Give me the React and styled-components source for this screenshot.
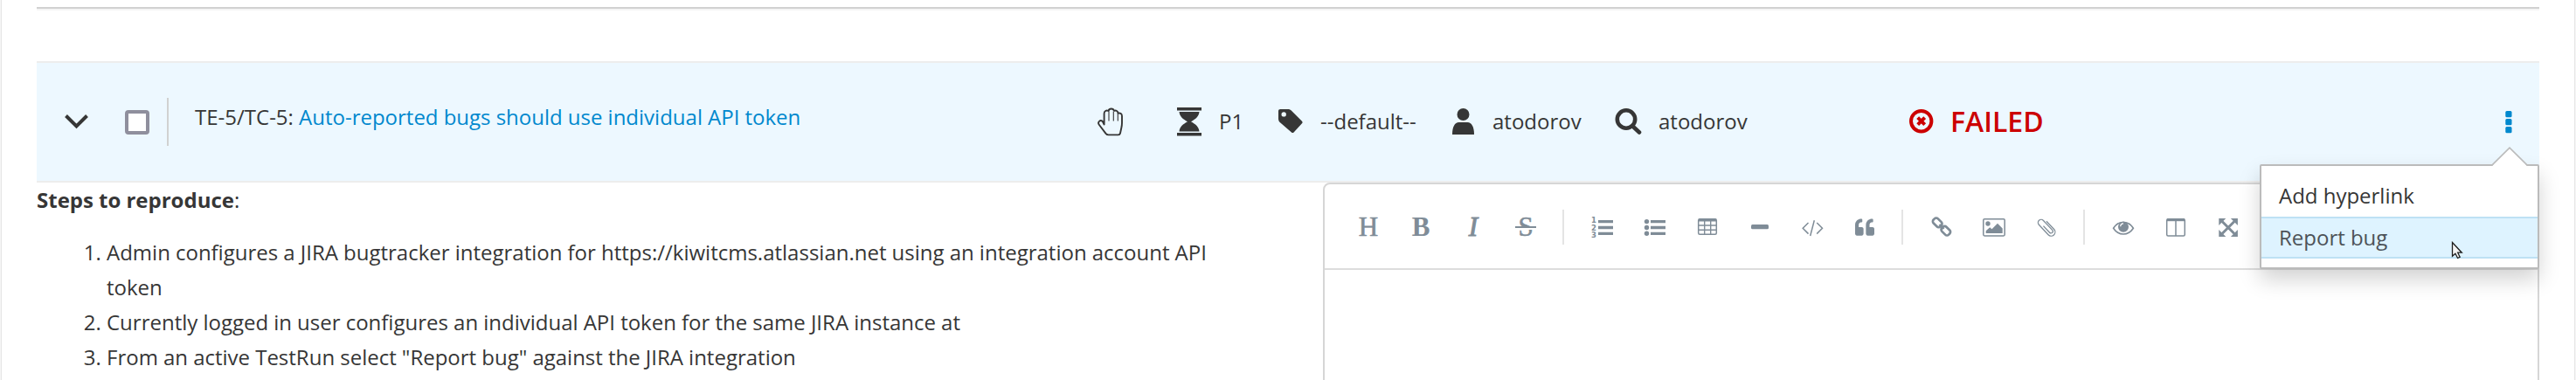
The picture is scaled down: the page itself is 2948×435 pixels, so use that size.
import React from "react";
import styled, { createGlobalStyle } from "styled-components";
import { FaQuoteLeft } from "react-icons/fa";

const GlobalStyle = createGlobalStyle`
  * { box-sizing: border-box; }
  body {
    margin: 0;
    background: #fff;
    color: #363636;
    font-family: "Open Sans", sans-serif;
    font-size: 24px;
    line-height: 40px;
    word-spacing: -0.12px;
  }
`;

const Page = styled.div`
  height: 435px;
  overflow: hidden;
  padding: 8px 41px 0;
  border: solid #f5f5f5;
  border-width: 0 1px;
  box-shadow: inset 1px 0 #e6e6e6, inset -1px 0 #e6e6e6;
`;

const Divider = styled.div`
  height: 4px;
  border-top: 2px solid #d1d1d1;
  border-bottom: 2px solid #f5f5f5;
  margin-bottom: 58px;
`;

const Row = styled.div`
  position: relative;
  display: flex;
  align-items: center;
  height: 139px;
  padding-left: 32px;
  background: #edf8ff;
  border-top: 2px solid #ededed;
  border-bottom: 2px solid #ededed;
`;

const Chevron = styled.svg`
  width: 27px;
  height: 18px;
  margin: 0 42px 2px 0;
`;

const Checkbox = styled.span`
  width: 28px;
  height: 28px;
  border: 4px solid #8f8f9d;
  border-radius: 4px;
  background: #fff;
  margin-right: 20px;
`;

const Separator = styled.span`
  width: 2px;
  height: 55px;
  background: #d1d1d1;
  margin-right: 30px;
`;

const Title = styled.div`
  width: 1033px;
  margin-bottom: 12px;
`;

const Link = styled.a`
  color: #0088ce;
`;

const Meta = styled.div`
  display: flex;
  align-items: center;
  width: ${(p) => p.$width}px;
  margin-bottom: 1px;
  white-space: nowrap;
`;

const MetaIcon = styled.span`
  display: flex;
  align-items: center;
  flex: none;
  width: ${(p) => p.$width}px;
  svg { display: block; }
`;

const Status = styled(Meta)`
  color: #cc0000;
  font-size: 32px;
  font-weight: 600;
`;

const Kebab = styled.svg`
  width: 8px;
  height: 26px;
  margin: 0 31px 0 auto;
`;

const Menu = styled.div`
  position: absolute;
  top: 116px;
  right: 0;
  width: 320px;
  padding: 10px 0;
  background: #fff;
  border: 2px solid #bbb;
  border-radius: 2px;
  box-shadow: 0 12px 24px rgba(3, 3, 3, 0.175);
  z-index: 2;
`;

const Caret = styled.svg`
  position: absolute;
  top: -22px;
  right: 11px;
  width: 42px;
  height: 23px;
`;

const MenuItem = styled.div`
  height: 48px;
  padding: 2px 20px;
  border: solid ${(p) => (p.$active ? "#bee1f4" : "transparent")};
  border-width: 2px 0;
  background: ${(p) => (p.$active ? "#def3ff" : "transparent")};
  color: ${(p) => (p.$active ? "#4d5258" : "#363636")};
`;

const Cursor = styled.svg`
  position: absolute;
  left: 217px;
  top: 86px;
  width: 15px;
  height: 22px;
`;

const Details = styled.div`
  display: flex;
  justify-content: space-between;
`;

const Steps = styled.div`
  width: 1392px;
`;

const Paragraph = styled.p`
  margin: 0 0 20px;
`;

const StepList = styled.ol`
  margin: 0;
  padding-left: 80px;
`;

const Editor = styled.div`
  width: 1392px;
  height: 260px;
  border: 2px solid #d6d6d6;
  border-radius: 8px;
`;

const Toolbar = styled.div`
  display: flex;
  align-items: center;
  height: 98px;
  padding: 2px 0 0 20px;
  border-bottom: 2px solid #ddd;
`;

const Tool = styled.span`
  display: flex;
  align-items: center;
  justify-content: center;
  position: relative;
  width: 60px;
  height: 60px;
  color: #7f8c97;
  svg { display: block; }
`;

const Letter = styled(Tool)`
  font: ${(p) => p.$face || "normal"} 31px/60px "Liberation Serif", serif;
  -webkit-text-stroke: ${(p) => p.$stroke || 0.6}px #7f8c97;
`;

const Strike = styled.span`
  position: absolute;
  left: 18px;
  top: 29px;
  width: 24px;
  height: 4px;
  background: #7f8c97;
  border: solid #fff;
  border-width: 0 0 2px;
`;

const ToolGap = styled.span`
  width: 2px;
  height: 40px;
  margin: 0 14px 0 12px;
  background: #e4e4e4;
`;

const Glyph = ({ children }) => (
  <Tool>
    <svg width="60" height="60" viewBox="0 0 60 60" fill="none" stroke="currentColor">
      {children}
    </svg>
  </Tool>
);

const Bars = () => (
  <path d="M25 22h17v3.3h-17zM25 28.8h17v3.4h-17zM25 35.7h17v3.3h-17z" fill="currentColor" stroke="none" />
);

const numeral = { fontFamily: "DejaVu Sans", fontWeight: 700, fontSize: 8.5, fill: "currentColor", stroke: "none" };

const HandIcon = () => (
  <svg width="30" height="33" viewBox="0 0 30 33" fill="none" stroke="#363636" strokeWidth="1.9" strokeLinejoin="round">
    <path d="M7.600 19.500V7c0-2.800 2.500-4.200 4.900-3 .9-3.200 5.500-3.300 6.500-.2 2.200-.9 4.300.4 4.600 2.800 2.500-.6 4.400.8 4.400 3.400v7.500c0 2-.3 4.200-.7 6l-1.300 6c-.3 1.300-1 1.900-2.200 1.900H12.500c-1.300 0-2.200-.5-3-1.500L1.800 19.700c-2.100-2.900 1.300-6.100 4-3.700z" />
    <path d="M13 4.500v11M18.300 4.500v11M23.300 6.500v9" strokeWidth="1.100" />
  </svg>
);

const HourglassIcon = () => (
  <svg width="28" height="33" viewBox="0 0 28 33" fill="#363636">
    <path d="M0 0h28v3.5H0zM0 29h28v3.5H0zM2.5 5h23c-.6 5.500-4.500 8.500-9.500 11.200 5 2.700 8.900 5.800 9.500 11.300h-23c.6-5.500 4.500-8.600 9.500-11.300C7 13.500 3.100 10.500 2.500 5z" />
  </svg>
);

const TagIcon = () => (
  <svg width="28" height="28" viewBox="0 0 28 28">
    <path fill="#363636" fillRule="evenodd" d="M0 2.200C0 .9.900 0 2.200 0H11c1.400 0 3 .7 4 1.700l12 12c.8.800.8 1.800 0 2.600l-9.400 10.100c-.8.800-1.800.8-2.600 0L1.700 15C.7 14 0 12.400 0 11zM6.200 3.200a2.700 2.700 0 1 0 0 5.400 2.700 2.700 0 0 0 0-5.400z" />
  </svg>
);

const UserIcon = () => (
  <svg width="25" height="30" viewBox="0 0 25 30" fill="#363636">
    <circle cx="12.500" cy="7" r="7" />
    <path d="M0 30c0-9 3-14 7.500-14h10C22 16 25 21 25 30z" />
  </svg>
);

const SearchIcon = () => (
  <svg width="31" height="30" viewBox="0 0 31 30" fill="none" stroke="#363636">
    <circle cx="13" cy="12.500" r="10.200" strokeWidth="4.600" />
    <path d="M20.500 20.500l7.500 7" strokeWidth="4.600" strokeLinecap="round" />
  </svg>
);

const FailedIcon = () => (
  <svg width="28" height="28" viewBox="0 0 28 28" fill="none" stroke="#cc0000">
    <circle cx="13.700" cy="13.700" r="11.700" strokeWidth="4" />
    <path d="M9.700 9.700l8 8M17.700 9.700l-8 8" strokeWidth="4" />
  </svg>
);

export default function App() {
  return (
    <>
      <GlobalStyle />
      <Page>
        <Divider />
        <Row>
          <Chevron viewBox="0 0 27 18" fill="none" stroke="#363636" strokeWidth="4">
            <path d="M1.500 2.500l12 12 12-12" />
          </Chevron>
          <Checkbox />
          <Separator />
          <Title>
            TE-5/TC-5: <Link>Auto-reported bugs should use individual API token</Link>
          </Title>
          <Meta $width={91}>
            <HandIcon />
          </Meta>
          <Meta $width={116}>
            <MetaIcon $width={48}><HourglassIcon /></MetaIcon>P1
          </Meta>
          <Meta $width={199}>
            <MetaIcon $width={48}><TagIcon /></MetaIcon>--default--
          </Meta>
          <Meta $width={186}>
            <MetaIcon $width={46}><UserIcon /></MetaIcon>atodorov
          </Meta>
          <Meta $width={337}>
            <MetaIcon $width={50}><SearchIcon /></MetaIcon>atodorov
          </Meta>
          <Status $width={160}>
            <MetaIcon $width={47}><FailedIcon /></MetaIcon>FAILED
          </Status>
          <Kebab viewBox="0 0 8 26" fill="#0088ce">
            <rect x=".3" y="0" width="7.200" height="7.200" rx="1.500" />
            <rect x=".3" y="9" width="7.200" height="7.200" rx="1.500" />
            <rect x=".3" y="18" width="7.200" height="7.200" rx="1.500" />
          </Kebab>
          <Menu>
            <Caret viewBox="0 0 42 23">
              <path d="M1 22L21 1.500 41 22v1H1z" fill="#fff" />
              <path d="M.5 21.500L21 1.200l20.500 20.300" fill="none" stroke="#bbb" strokeWidth="1.600" />
            </Caret>
            <MenuItem>Add hyperlink</MenuItem>
            <MenuItem $active>Report bug</MenuItem>
            <Cursor viewBox="0 0 15 22">
              <path d="M1.500 1.500v15.800l3.400-3.100 2.700 5.300 2.600-1.300-2.500-5h4.600z" fill="#f4f4f4" stroke="#1c1c1c" strokeWidth="1.300" />
            </Cursor>
          </Menu>
        </Row>
        <Details>
          <Steps>
            <Paragraph><strong>Steps to reproduce</strong>:</Paragraph>
            <StepList>
              <li>Admin configures a JIRA bugtracker integration for https://kiwitcms.atlassian.net using an integration account API token</li>
              <li>Currently logged in user configures an individual API token for the same JIRA instance at</li>
              <li>From an active TestRun select "Report bug" against the JIRA integration</li>
            </StepList>
          </Steps>
          <Editor>
            <Toolbar>
              <Letter>H</Letter>
              <Letter $face="bold" $stroke={0.1}>B</Letter>
              <Letter $face="italic" $stroke={1}>I</Letter>
              <Letter>S<Strike /></Letter>
              <ToolGap />
              <Glyph>
                <text x="17" y="25" {...numeral}>1</text>
                <text x="17" y="33.500" {...numeral}>2</text>
                <text x="17" y="42" {...numeral}>3</text>
                <Bars />
              </Glyph>
              <Glyph>
                <g fill="currentColor" stroke="none">
                  <circle cx="20.500" cy="23.600" r="2.700" />
                  <circle cx="20.500" cy="30.500" r="2.700" />
                  <circle cx="20.500" cy="37.300" r="2.700" />
                </g>
                <Bars />
              </Glyph>
              <Glyph>
                <rect x="19.700" y="20.700" width="20.600" height="17.600" rx="1.500" strokeWidth="1.500" />
                <path d="M20 22h20" strokeWidth="3" />
                <path d="M26.700 22v16M33.700 22v16M20 28h20M20 33.300h20" strokeWidth="1.400" />
              </Glyph>
              <Glyph>
                <rect x="20" y="27" width="20" height="5.200" rx="1.500" fill="currentColor" stroke="none" />
              </Glyph>
              <Glyph>
                <path d="M25.500 25l-6.300 6.300 6.300 6.300M35.200 25l6.300 6.300-6.300 6.300M32.300 22.300L27.700 40" strokeWidth="1.500" />
              </Glyph>
              <Tool><FaQuoteLeft size={22} /></Tool>
              <ToolGap />
              <Glyph>
                <g strokeWidth="2.700">
                  <rect x="-5.500" y="-3.600" width="11" height="7.200" rx="2.800" transform="translate(25.200 24.800) rotate(45)" />
                  <rect x="-5.500" y="-3.600" width="11" height="7.200" rx="2.800" transform="translate(34.800 34.200) rotate(45)" />
                  <path d="M27.500 27l5 5" strokeWidth="2.400" />
                </g>
              </Glyph>
              <Glyph>
                <rect x="17.800" y="20.700" width="24.400" height="19.200" rx="1.300" strokeWidth="1.500" />
                <g fill="currentColor" stroke="none">
                  <circle cx="23" cy="26" r="2.700" />
                  <path d="M20.700 37v-2.800l4.500-3.900 2.300 2 6.500-6.500 5.700 5.700V37z" />
                </g>
              </Glyph>
              <Glyph>
                <path transform="translate(30.300 30.500) rotate(-43)" d="M4.700-5.500V7.200a4.500 4.500 0 0 1-9 0V-8.500a3.500 3.500 0 0 1 7 0V6.500a2.100 2.100 0 0 1-4.200 0V-4" strokeWidth="1.300" />
              </Glyph>
              <ToolGap />
              <Glyph>
                <path d="M18.600 31.300c6-9.500 16.800-9.500 22.800 0-6 9-16.800 9-22.800 0z" strokeWidth="1.600" />
                <circle cx="30" cy="29.800" r="6" fill="currentColor" stroke="none" />
                <path d="M26.700 29.300a3.500 3.500 0 0 1 3.300-3.400" stroke="#fff" strokeWidth="1.200" />
              </Glyph>
              <Glyph>
                <rect x="19.700" y="20.700" width="20.600" height="19.200" rx="1.500" strokeWidth="1.500" />
                <path d="M20 21.700h20" strokeWidth="3" />
                <path d="M30 22v18" strokeWidth="1.500" />
              </Glyph>
              <Glyph>
                <path d="M23 23.500l14 14M37 23.500l-14 14" strokeWidth="3" />
                <path d="M19.300 20h8l-8 8zM40.900 20h-8l8 8zM19.300 41h8l-8-8zM40.900 41h-8l8-8z" fill="currentColor" stroke="none" />
              </Glyph>
            </Toolbar>
          </Editor>
        </Details>
      </Page>
    </>
  );
}
